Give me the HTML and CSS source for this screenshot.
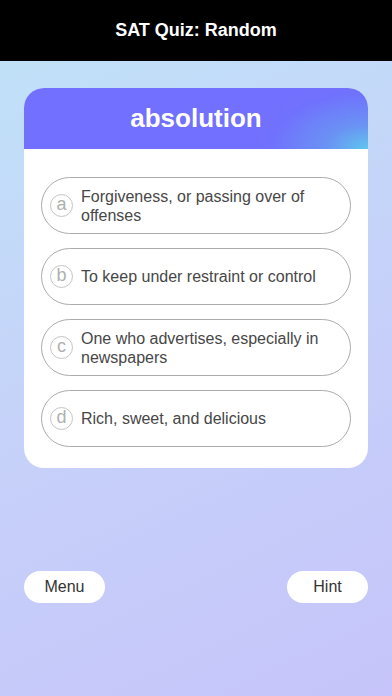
FILE: index.html
```html
<!DOCTYPE html>
<html>
<head>
<meta charset="utf-8">
<link rel="stylesheet" href="styles.css">
</head>
<body>
<div class="app">
  <header class="topbar">SAT Quiz: Random</header>
  <main class="content">
    <section class="card">
      <div class="card-head">absolution</div>
      <div class="options">
        <div class="option"><span class="letter">a</span><span class="text">Forgiveness, or passing over of offenses</span></div>
        <div class="option"><span class="letter">b</span><span class="text">To keep under restraint or control</span></div>
        <div class="option"><span class="letter">c</span><span class="text">One who advertises, especially in newspapers</span></div>
        <div class="option"><span class="letter">d</span><span class="text">Rich, sweet, and delicious</span></div>
      </div>
    </section>
    <div class="actions">
      <button class="pill-btn">Menu</button>
      <button class="pill-btn">Hint</button>
    </div>
  </main>
</div>
</body>
</html>
```

FILE: styles.css
```css
* { box-sizing: border-box; }
html, body { margin: 0; padding: 0; }
body {
  width: 392px;
  height: 696px;
  overflow: hidden;
  font-family: "Liberation Sans", Arial, sans-serif;
}
.app {
  display: flex;
  flex-direction: column;
  height: 696px;
}
.topbar {
  height: 61px;
  background: #000;
  color: #fff;
  font-weight: bold;
  font-size: 18px;
  display: flex;
  align-items: center;
  justify-content: center;
  flex-shrink: 0;
}
.content {
  flex: 1;
  background: linear-gradient(155deg, #c0e1f8 0%, #c6d2f9 45%, #c6c4fa 100%);
  padding: 27px 24px 0 24px;
  display: flex;
  flex-direction: column;
}
.card {
  background: #fff;
  border-radius: 20px;
  overflow: hidden;
}
.card-head {
  height: 61px;
  background: radial-gradient(ellipse 120px 70px at 100% 100%, #5fc6ee 0%, #6a92f4 35%, #7072fd 80%, #7270fe 100%);
  color: #fff;
  font-weight: bold;
  font-size: 26px;
  display: flex;
  align-items: center;
  justify-content: center;
  padding-bottom: 1px;
}
.options {
  display: flex;
  flex-direction: column;
  gap: 14px;
  padding: 28px 17px 21px 17px;
}
.option {
  height: 57px;
  border: 1.5px solid #ababab;
  border-radius: 29px;
  display: flex;
  align-items: center;
  padding: 0 16px 0 8px;
  gap: 8px;
}
.letter {
  width: 23px;
  height: 23px;
  border: 1.2px solid #c4c4c4;
  border-radius: 50%;
  color: #b0b0b0;
  font-size: 18px;
  line-height: 19px;
  display: flex;
  align-items: center;
  justify-content: center;
  flex-shrink: 0;
  padding-bottom: 2px;
}
.text {
  color: #474747;
  font-size: 16px;
  line-height: 19px;
}
.actions {
  display: flex;
  justify-content: space-between;
  margin-top: 103px;
}
.pill-btn {
  width: 81px;
  height: 32px;
  border: none;
  border-radius: 16px;
  background: #fff;
  color: #333;
  font-family: "Liberation Sans", Arial, sans-serif;
  font-size: 16px;
  padding: 0;
}
```
